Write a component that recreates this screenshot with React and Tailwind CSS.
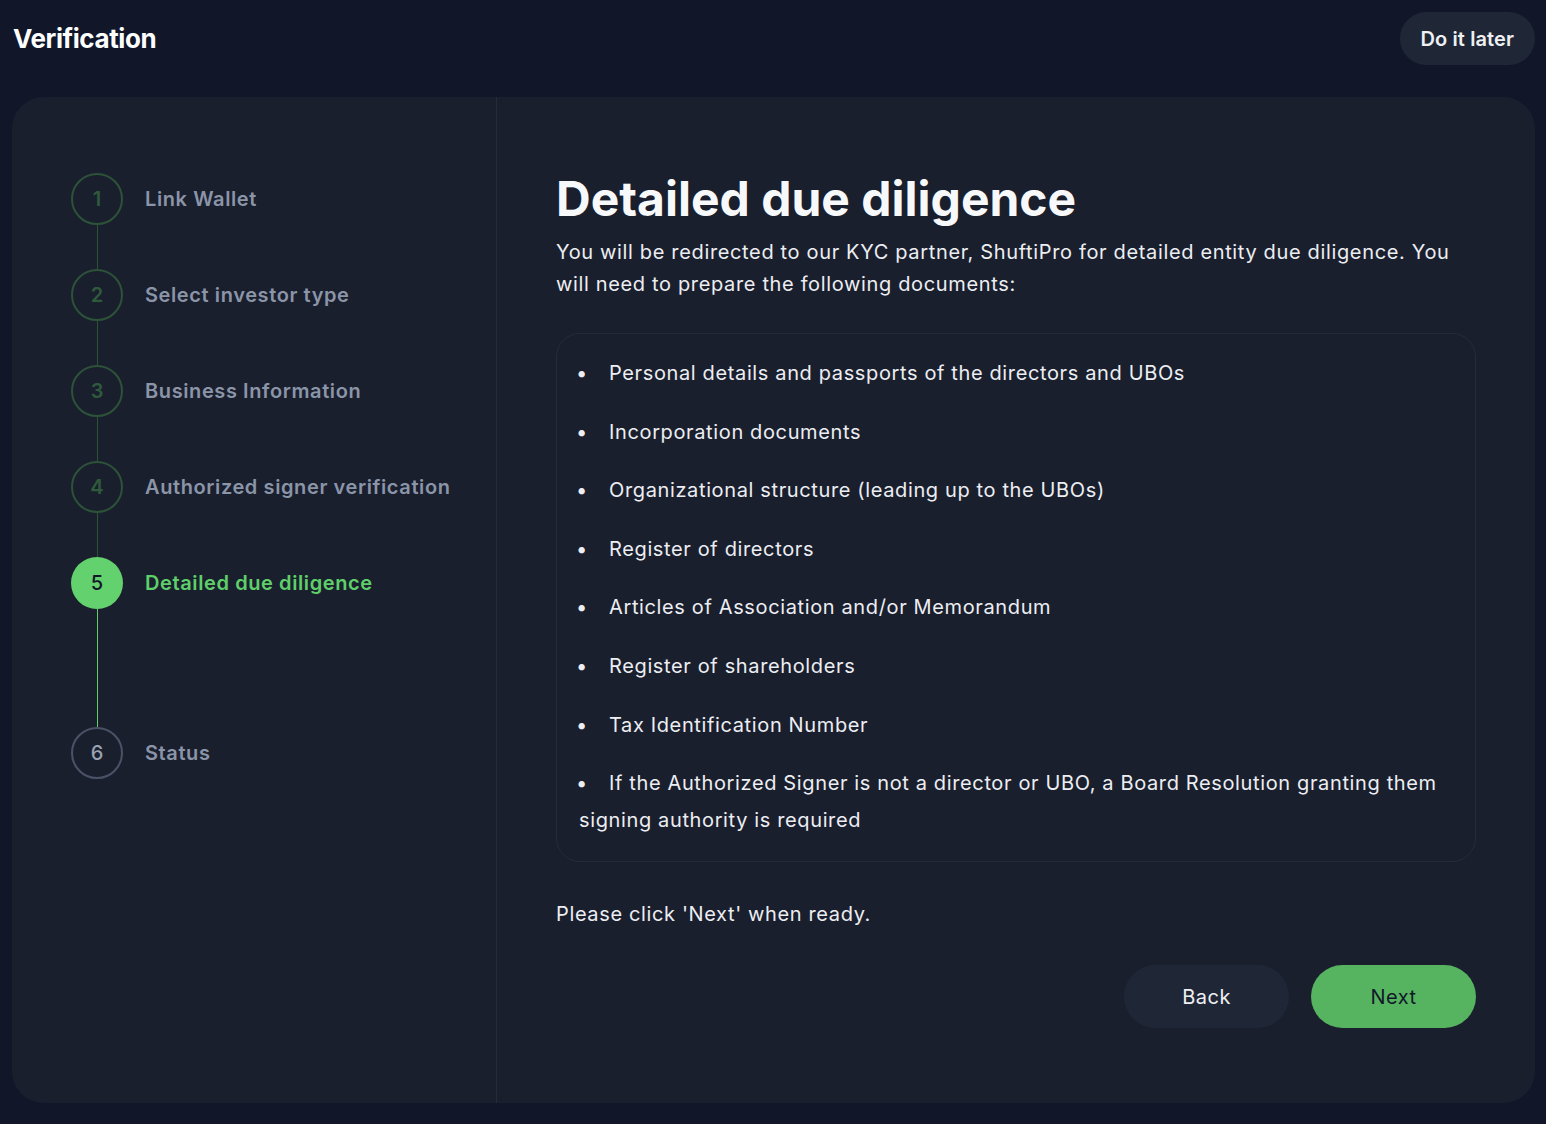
import React from "react";

const steps = [
  { n: 1, label: "Link Wallet", state: "done" },
  { n: 2, label: "Select investor type", state: "done" },
  { n: 3, label: "Business Information", state: "done" },
  { n: 4, label: "Authorized signer verification", state: "done" },
  { n: 5, label: "Detailed due diligence", state: "active" },
  { n: 6, label: "Status", state: "todo" },
];

const docs = [
  "Personal details and passports of the directors and UBOs",
  "Incorporation documents",
  "Organizational structure (leading up to the UBOs)",
  "Register of directors",
  "Articles of Association and/or Memorandum",
  "Register of shareholders",
  "Tax Identification Number",
  "If the Authorized Signer is not a director or UBO, a Board Resolution granting them signing authority is required",
];

function Circle({ step }) {
  if (step.state === "active") {
    return (
      <div className="w-[52px] h-[52px] shrink-0 rounded-full bg-[#63d16d] flex items-center justify-center text-[20px] font-medium text-[#111729]">
        {step.n}
      </div>
    );
  }
  if (step.state === "done") {
    return (
      <div className="w-[52px] h-[52px] shrink-0 rounded-full border-2 border-[#2c5238] flex items-center justify-center text-[20px] font-semibold text-[#2f5a3c]">
        {step.n}
      </div>
    );
  }
  return (
    <div className="w-[52px] h-[52px] shrink-0 rounded-full border-2 border-[#4a5366] flex items-center justify-center text-[20px] font-medium text-[#9aa3b3]">
      {step.n}
    </div>
  );
}

export default function App() {
  return (
    <div
      className="min-h-[1124px] bg-[#111729] pl-3 pr-[11px] pt-3 pb-[21px] text-white"
      style={{ fontFamily: "Inter, 'Noto Sans', sans-serif" }}
    >
      <header className="flex items-center justify-between h-[53px]">
        <h1 className="pl-[1px] text-[26px] font-bold tracking-[-0.4px] text-white">Verification</h1>
        <button className="h-[53px] px-[21px] rounded-full bg-[#1f2736] text-[20px] font-semibold tracking-[0.1px] text-[#eef0f4]">
          Do it later
        </button>
      </header>

      <div className="mt-8 h-[1006px] rounded-[32px] bg-[#1a1f2e] flex overflow-hidden">
        {/* Left steps */}
        <aside className="w-[485px] shrink-0 border-r border-[#242b3a] pl-[59px] pt-[76px]">
          <div className="flex flex-col">
            {steps.map((s, i) => {
              const next = steps[i + 1];
              let lineH = "h-[44px]";
              let lineColor = "bg-[#2c5238]";
              if (s.state === "active") {
                lineH = "h-[118px]";
                lineColor = "bg-[#5ecf69]";
              }
              return (
                <div key={s.n}>
                  <div className="flex items-center">
                    <Circle step={s} />
                    <span
                      className={
                        "ml-[22px] text-[20px] font-semibold tracking-[0.6px] " +
                        (s.state === "active" ? "text-[#5fcf6a]" : "text-[#8b95a8]")
                      }
                    >
                      {s.label}
                    </span>
                  </div>
                  {next && (
                    <div className="w-[52px] flex justify-center">
                      <div className={"w-px " + lineH + " " + lineColor} />
                    </div>
                  )}
                </div>
              );
            })}
          </div>
        </aside>

        {/* Right content */}
        <main className="flex-1 pl-[59px] pr-[59px] pt-[73px]">
          <h2 className="text-[48px] leading-[58px] font-bold tracking-[0px] text-[#f7f8fa]">
            Detailed due diligence
          </h2>
          <p className="mt-2 text-[20px] leading-[32px] tracking-[0.65px] text-[#eceef2]">
            You will be redirected to our KYC partner, ShuftiPro for detailed entity due diligence. You will need to
            prepare the following documents:
          </p>

          <div className="mt-[33px] rounded-3xl border border-[#242b3a] pl-[22px] pr-[22px] pt-[21px] pb-[22px]">
            <ul className="flex flex-col gap-[21.6px]">
              {docs.map((d) => (
                <li key={d} className="text-[20px] leading-[37px] tracking-[0.63px] text-[#eceef2]">
                  <span className="inline-block -ml-[3px] w-[33px]">•</span>
                  {d}
                </li>
              ))}
            </ul>
          </div>

          <p className="mt-9 text-[20px] leading-[32px] tracking-[0.63px] text-[#eceef2]">
            Please click 'Next' when ready.
          </p>

          <div className="mt-[35px] flex justify-end gap-[22px]">
            <button className="w-[165px] h-[63px] rounded-full bg-[#1f2736] text-[20px] tracking-[0.5px] text-[#eef0f4]">
              Back
            </button>
            <button className="w-[165px] h-[63px] rounded-full bg-[#56b460] text-[20px] tracking-[0.5px] text-[#111729]">
              Next
            </button>
          </div>
        </main>
      </div>
    </div>
  );
}
